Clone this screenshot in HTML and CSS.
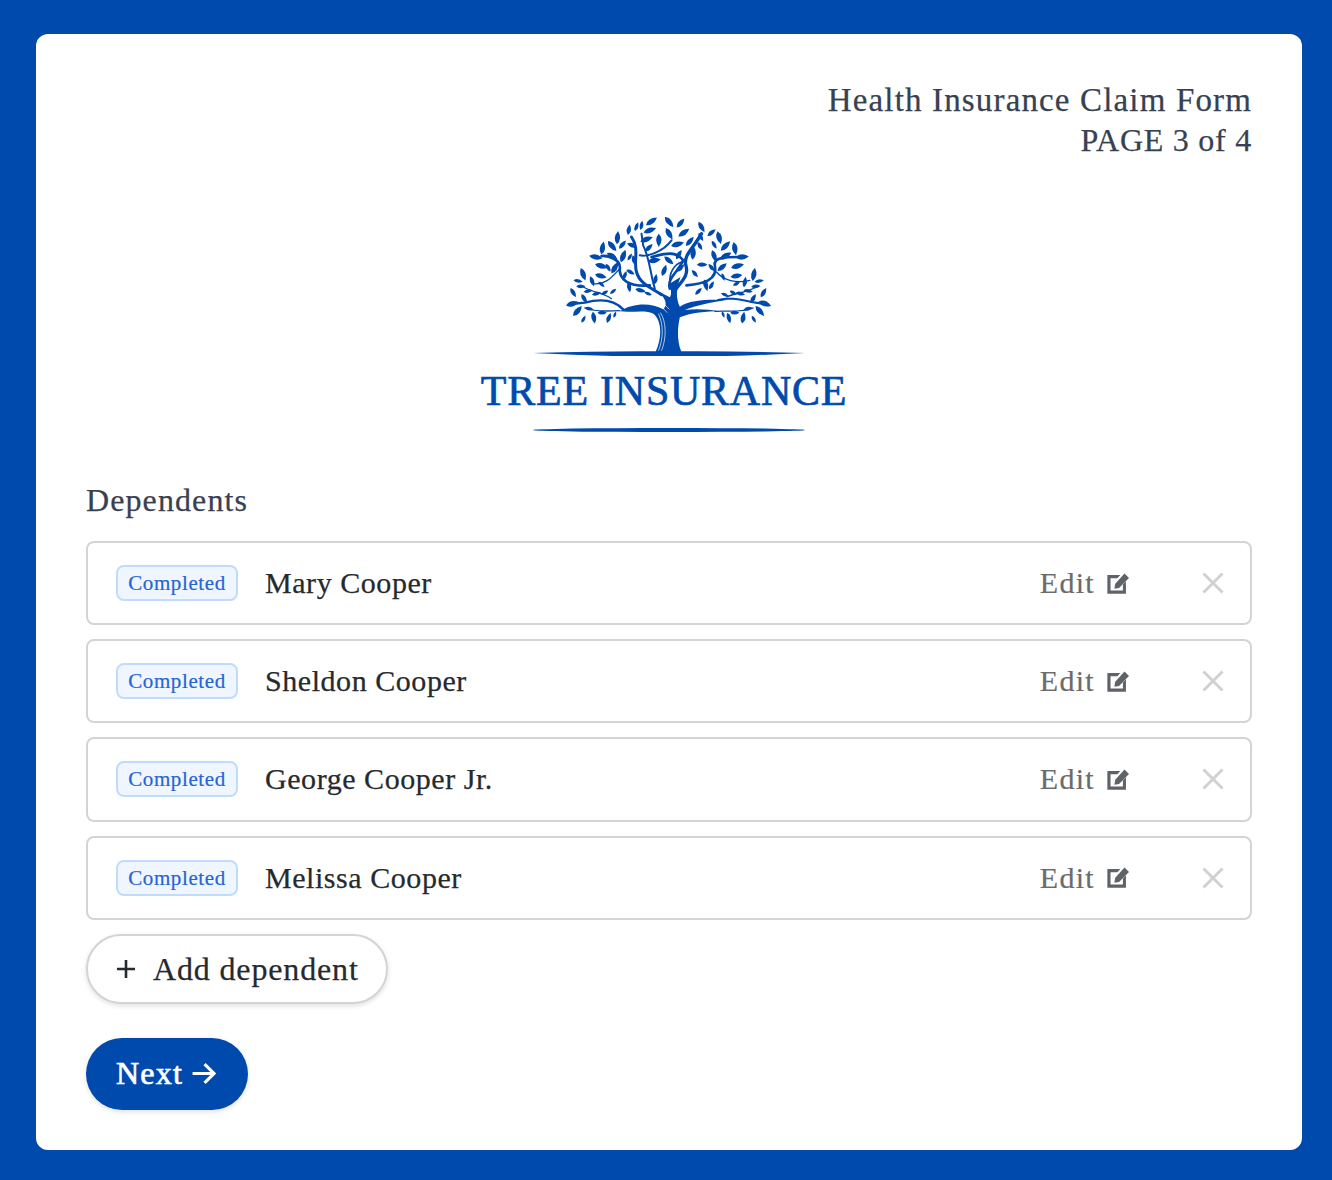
FILE: index.html
```html
<!DOCTYPE html>
<html lang="en">
  <head>
    <meta charset="UTF-8" />
    <meta name="viewport" content="width=device-width, initial-scale=1.0" />
    <title>Health Insurance Claim Form</title>
    <link rel="stylesheet" href="styles.css">
  </head>
  <body>
    <div class="card">
      <div class="form-title">
        <div class="form-name">Health Insurance Claim Form</div>
        <div class="form-page">PAGE 3 of 4</div>
      </div>

      <div class="logo">
        <svg class="logo-tree" viewBox="190 35 815 417" fill="#004aad">
          <defs>
            <path id="lf" d="M-20 0Q-3 -16 20 0Q-3 16 -20 0Z" />
          </defs>
          <!-- trunk and ground -->
          <path d="M190 443Q400 437 558 438C575 400 578 350 552 326C530 312 490 322 450 318C490 292 545 292 580 312C594 296 588 282 565 258L600 276C606 266 604 250 598 236L632 215C618 250 618 280 630 304C660 284 710 282 770 284C720 292 680 300 645 314C680 310 715 312 750 318C710 318 665 322 630 336C622 370 622 410 634 438Q800 437 1005 443Q800 454 600 454Q400 454 190 443Z" />
          <path d="M566 436C580 400 582 360 566 325" fill="none" stroke="#fff" stroke-width="2" />
          <path d="M575 436C590 400 590 350 572 322" fill="none" stroke="#fff" stroke-width="2" />
          <path d="M515 288C550 290 578 303 592 322" fill="none" stroke="#fff" stroke-width="2" />
          <path d="M530 280C560 282 585 295 598 312" fill="none" stroke="#fff" stroke-width="2" />
          <!-- branches -->
          <g fill="none" stroke="#004aad" stroke-linecap="round">
            <path stroke-width="9" d="M575 268C540 245 510 235 500 200C490 170 510 130 485 95" />
            <path stroke-width="6" d="M510 150C530 155 580 140 605 105" />
            <path stroke-width="8" d="M540 240C480 245 445 225 450 185C450 165 420 150 395 152" />
            <path stroke-width="4" d="M450 190C430 210 410 240 370 235" />
            <path stroke-width="7" d="M460 312C430 280 390 280 345 292L305 296" />
            <path stroke-width="4" d="M450 316C420 316 380 322 345 308" />
            <path stroke-width="4" d="M425 280C400 262 370 262 340 245" />
            <path stroke-width="10" d="M612 262C625 235 660 215 648 180C640 150 670 130 695 85" />
            <path stroke-width="8" d="M650 240C700 235 745 225 735 180C730 155 770 155 805 155" />
            <path stroke-width="4" d="M740 200C760 225 800 235 840 225" />
            <path stroke-width="6" d="M745 284C790 272 830 290 885 296" />
            <path stroke-width="4" d="M735 318C780 316 820 322 850 308" />
            <path stroke-width="4" d="M770 275C800 262 830 262 860 245" />
            <path stroke-width="8" d="M600 250C590 220 625 200 640 165C615 130 570 150 545 155" />
            <path stroke-width="5" d="M640 170C625 170 600 190 600 225" />
            <path stroke-width="6" d="M555 250C540 200 540 160 520 120L515 85" />
          </g>
          <!-- leaves, left side -->
          <use href="#lf" transform="translate(545 48) rotate(-35)" />
          <use href="#lf" transform="translate(540 75) rotate(-20)" />
          <use href="#lf" transform="translate(515 60) rotate(-80) scale(.7)" />
          <use href="#lf" transform="translate(500 64) rotate(-70) scale(.7)" />
          <use href="#lf" transform="translate(477 73) rotate(-80) scale(.8)" />
          <use href="#lf" transform="translate(443 97) rotate(-85)" />
          <use href="#lf" transform="translate(398 128) rotate(-80)" />
          <use href="#lf" transform="translate(427 122) rotate(50)" />
          <use href="#lf" transform="translate(458 118) rotate(-50) scale(.8)" />
          <use href="#lf" transform="translate(530 102) rotate(-20)" />
          <use href="#lf" transform="translate(487 120) rotate(20) scale(.8)" />
          <use href="#lf" transform="translate(537 127) rotate(-45) scale(.8)" />
          <use href="#lf" transform="translate(378 155) rotate(10)" />
          <use href="#lf" transform="translate(427 152) rotate(30) scale(.9)" />
          <use href="#lf" transform="translate(460 152) rotate(-70)" />
          <use href="#lf" transform="translate(395 182) rotate(15)" />
          <use href="#lf" transform="translate(415 187) rotate(60) scale(.7)" />
          <use href="#lf" transform="translate(435 187) rotate(-60)" />
          <use href="#lf" transform="translate(393 212) rotate(15) scale(.9)" />
          <use href="#lf" transform="translate(340 207) rotate(70)" />
          <use href="#lf" transform="translate(325 227) rotate(10) scale(.7)" />
          <use href="#lf" transform="translate(333 243) rotate(0) scale(.7)" />
          <use href="#lf" transform="translate(367 228) rotate(70) scale(.8)" />
          <use href="#lf" transform="translate(395 237) rotate(40) scale(.6)" />
          <use href="#lf" transform="translate(310 262) rotate(60) scale(.8)" />
          <use href="#lf" transform="translate(355 257) rotate(-10) scale(.7)" />
          <use href="#lf" transform="translate(380 265) rotate(-15) scale(.7)" />
          <use href="#lf" transform="translate(405 262) rotate(-30) scale(.6)" />
          <use href="#lf" transform="translate(430 258) rotate(-40) scale(.6)" />
          <use href="#lf" transform="translate(343 280) rotate(60) scale(.8)" />
          <use href="#lf" transform="translate(308 295) rotate(-15)" />
          <use href="#lf" transform="translate(323 317) rotate(-50)" />
          <use href="#lf" transform="translate(372 337) rotate(80) scale(.9)" />
          <use href="#lf" transform="translate(341 342) rotate(-60) scale(.6)" />
          <use href="#lf" transform="translate(417 338) rotate(-70) scale(.8)" />
          <use href="#lf" transform="translate(358 310) rotate(10) scale(.7)" />
          <use href="#lf" transform="translate(397 322) rotate(0) scale(.7)" />
          <use href="#lf" transform="translate(435 328) rotate(-70) scale(.5)" />
          <use href="#lf" transform="translate(512 255) rotate(15) scale(.8)" />
          <use href="#lf" transform="translate(535 265) rotate(20) scale(.6)" />
          <use href="#lf" transform="translate(478 245) rotate(80) scale(.8)" />
          <use href="#lf" transform="translate(465 210) rotate(-70) scale(.7)" />
          <use href="#lf" transform="translate(493 165) rotate(75) scale(.8)" />
          <use href="#lf" transform="translate(480 155) rotate(-60) scale(.6)" />
          <use href="#lf" transform="translate(482 200) rotate(30) scale(.7)" />
          <!-- leaves, middle -->
          <use href="#lf" transform="translate(598 50) rotate(50)" />
          <use href="#lf" transform="translate(632 53) rotate(-50) scale(.9)" />
          <use href="#lf" transform="translate(567 105) rotate(90)" />
          <use href="#lf" transform="translate(598 85) rotate(60)" />
          <use href="#lf" transform="translate(553 165) rotate(-10)" />
          <use href="#lf" transform="translate(597 165) rotate(40) scale(.9)" />
          <use href="#lf" transform="translate(627 148) rotate(-60) scale(.8)" />
          <use href="#lf" transform="translate(583 195) rotate(-70) scale(.9)" />
          <use href="#lf" transform="translate(557 222) rotate(-80) scale(.8)" />
          <use href="#lf" transform="translate(632 188) rotate(-45) scale(.8)" />
          <use href="#lf" transform="translate(615 237) rotate(-50) scale(.9)" />
          <!-- leaves, right side -->
          <use href="#lf" transform="translate(642 82) rotate(-35)" />
          <use href="#lf" transform="translate(695 65) rotate(60) scale(.9)" />
          <use href="#lf" transform="translate(725 82) rotate(-40) scale(.8)" />
          <use href="#lf" transform="translate(748 97) rotate(75)" />
          <use href="#lf" transform="translate(693 95) rotate(60) scale(.7)" />
          <use href="#lf" transform="translate(660 108) rotate(-50) scale(.9)" />
          <use href="#lf" transform="translate(623 117) rotate(-15)" />
          <use href="#lf" transform="translate(690 122) rotate(60) scale(.7)" />
          <use href="#lf" transform="translate(733 118) rotate(60) scale(.7)" />
          <use href="#lf" transform="translate(767 122) rotate(-45)" />
          <use href="#lf" transform="translate(795 130) rotate(80)" />
          <use href="#lf" transform="translate(670 143) rotate(-85)" />
          <use href="#lf" transform="translate(817 155) rotate(-5)" />
          <use href="#lf" transform="translate(767 152) rotate(-30)" />
          <use href="#lf" transform="translate(733 152) rotate(70) scale(.9)" />
          <use href="#lf" transform="translate(803 182) rotate(-15)" />
          <use href="#lf" transform="translate(757 185) rotate(-40) scale(.9)" />
          <use href="#lf" transform="translate(725 187) rotate(50) scale(.7)" />
          <use href="#lf" transform="translate(697 178) rotate(0) scale(.8)" />
          <use href="#lf" transform="translate(800 212) rotate(-10) scale(.9)" />
          <use href="#lf" transform="translate(760 215) rotate(70) scale(.6)" />
          <use href="#lf" transform="translate(725 240) rotate(-60) scale(.7)" />
          <use href="#lf" transform="translate(675 205) rotate(50) scale(.7)" />
          <use href="#lf" transform="translate(708 240) rotate(75) scale(.9)" />
          <use href="#lf" transform="translate(686 258) rotate(-45) scale(.7)" />
          <use href="#lf" transform="translate(852 207) rotate(-80)" />
          <use href="#lf" transform="translate(868 227) rotate(-10) scale(.7)" />
          <use href="#lf" transform="translate(858 243) rotate(-5) scale(.7)" />
          <use href="#lf" transform="translate(825 230) rotate(-80) scale(.8)" />
          <use href="#lf" transform="translate(800 235) rotate(-30) scale(.6)" />
          <use href="#lf" transform="translate(881 262) rotate(-60) scale(.8)" />
          <use href="#lf" transform="translate(835 257) rotate(10) scale(.7)" />
          <use href="#lf" transform="translate(812 265) rotate(15) scale(.7)" />
          <use href="#lf" transform="translate(790 262) rotate(30) scale(.6)" />
          <use href="#lf" transform="translate(765 268) rotate(20) scale(.6)" />
          <use href="#lf" transform="translate(850 280) rotate(-60) scale(.8)" />
          <use href="#lf" transform="translate(885 295) rotate(20)" />
          <use href="#lf" transform="translate(870 317) rotate(50)" />
          <use href="#lf" transform="translate(820 337) rotate(-80) scale(.9)" />
          <use href="#lf" transform="translate(852 342) rotate(60) scale(.6)" />
          <use href="#lf" transform="translate(777 338) rotate(75) scale(.8)" />
          <use href="#lf" transform="translate(835 310) rotate(-10) scale(.7)" />
          <use href="#lf" transform="translate(795 322) rotate(0) scale(.7)" />
          <use href="#lf" transform="translate(760 328) rotate(70) scale(.5)" />
        </svg>
        <div class="logo-name">TREE INSURANCE</div>
        <div class="logo-rule"></div>
      </div>

      <div class="section-label">Dependents</div>

      <div class="dependents">
        <div class="dependent">
          <span class="badge">Completed</span>
          <span class="dependent-name">Mary Cooper</span>
          <a href="#" class="edit-link">Edit
            <svg class="edit-icon" viewBox="0 0 24 24"><path d="M3 4.5h11.5l-2.6 2.8H5.8v11h11v-5.5l2.7-2.8V21H3z" /><path d="M10 12.2 18.2 3l4 4-8.8 9-4.2.6z" /></svg>
          </a>
          <svg class="remove-icon" viewBox="0 0 22 22"><path d="M1.5 1.5 20.5 20.5M20.5 1.5 1.5 20.5" /></svg>
        </div>
        <div class="dependent">
          <span class="badge">Completed</span>
          <span class="dependent-name">Sheldon Cooper</span>
          <a href="#" class="edit-link">Edit
            <svg class="edit-icon" viewBox="0 0 24 24"><path d="M3 4.5h11.5l-2.6 2.8H5.8v11h11v-5.5l2.7-2.8V21H3z" /><path d="M10 12.2 18.2 3l4 4-8.8 9-4.2.6z" /></svg>
          </a>
          <svg class="remove-icon" viewBox="0 0 22 22"><path d="M1.5 1.5 20.5 20.5M20.5 1.5 1.5 20.5" /></svg>
        </div>
        <div class="dependent">
          <span class="badge">Completed</span>
          <span class="dependent-name">George Cooper Jr.</span>
          <a href="#" class="edit-link">Edit
            <svg class="edit-icon" viewBox="0 0 24 24"><path d="M3 4.5h11.5l-2.6 2.8H5.8v11h11v-5.5l2.7-2.8V21H3z" /><path d="M10 12.2 18.2 3l4 4-8.8 9-4.2.6z" /></svg>
          </a>
          <svg class="remove-icon" viewBox="0 0 22 22"><path d="M1.5 1.5 20.5 20.5M20.5 1.5 1.5 20.5" /></svg>
        </div>
        <div class="dependent">
          <span class="badge">Completed</span>
          <span class="dependent-name">Melissa Cooper</span>
          <a href="#" class="edit-link">Edit
            <svg class="edit-icon" viewBox="0 0 24 24"><path d="M3 4.5h11.5l-2.6 2.8H5.8v11h11v-5.5l2.7-2.8V21H3z" /><path d="M10 12.2 18.2 3l4 4-8.8 9-4.2.6z" /></svg>
          </a>
          <svg class="remove-icon" viewBox="0 0 22 22"><path d="M1.5 1.5 20.5 20.5M20.5 1.5 1.5 20.5" /></svg>
        </div>
      </div>

      <button class="add-btn">
        <svg class="add-icon" viewBox="0 0 20 20"><path d="M10 1V19M1 10H19" /></svg>
        Add dependent
      </button>

      <button class="next-btn">
        Next
        <svg class="next-icon" viewBox="0 0 24 24"><path d="M1.5 12H22M13 3l9 9-9 9" /></svg>
      </button>
    </div>
  </body>
</html>
```

FILE: styles.css
```css
* {
  box-sizing: border-box;
}
body {
  font-family: "Liberation Serif", "Times New Roman", serif;
  margin: 0;
  padding: 34px 30px 30px 36px;
  background-color: #004aad;
}
.card {
  background-color: #fff;
  border-radius: 12px;
  height: 1116px;
  padding: 46px 50px 0;
  display: flex;
  flex-direction: column;
  align-items: stretch;
}
.form-title {
  text-align: right;
  line-height: 40px;
  color: #374151;
  -webkit-text-stroke: 0.25px #374151;
}
.form-name {
  font-size: 33px;
  letter-spacing: 1.15px;
}
.form-page {
  font-size: 32px;
  letter-spacing: 0.75px;
}
.logo {
  display: flex;
  flex-direction: column;
  align-items: center;
  margin-top: 57px;
}
.logo-tree {
  display: block;
  width: 272px;
  height: 139px;
}
.logo-name {
  font-size: 42px;
  line-height: 40px;
  letter-spacing: 0.75px;
  color: #004aad;
  margin: 15px 10px 0 0;
  -webkit-text-stroke: 0.7px #004aad;
}
.logo-rule {
  width: 272px;
  height: 4px;
  margin-top: 17px;
  background-color: #004aad;
  border-radius: 50%;
}
.section-label {
  font-size: 32px;
  line-height: 36px;
  letter-spacing: 1.1px;
  color: #374151;
  margin-top: 50px;
  -webkit-text-stroke: 0.25px #374151;
}
.dependents {
  display: flex;
  flex-direction: column;
  gap: 14px;
  margin-top: 23px;
}
.dependent {
  display: flex;
  align-items: center;
  height: 84.2px;
  padding: 0 26px 0 28px;
  border: 2px solid #d4d4d4;
  border-radius: 8px;
}
.badge {
  width: 122px;
  height: 36px;
  line-height: 33px;
  text-align: center;
  font-size: 21px;
  letter-spacing: 0.6px;
  color: #2563d6;
  background-color: #eff6ff;
  border: 2px solid #bfdbfe;
  border-radius: 8px;
  -webkit-text-stroke: 0.2px #2563d6;
}
.dependent-name {
  margin-left: 27px;
  font-size: 30px;
  letter-spacing: 0.55px;
  color: #262a2e;
  -webkit-text-stroke: 0.25px #262a2e;
}
.edit-link {
  display: flex;
  align-items: center;
  gap: 9px;
  margin-left: auto;
  font-size: 30px;
  letter-spacing: 1.3px;
  color: #6b6b6b;
  text-decoration: none;
  -webkit-text-stroke: 0.2px #6b6b6b;
}
.edit-icon {
  width: 27px;
  height: 27px;
  fill: #5f6368;
}
.remove-icon {
  width: 22px;
  height: 22px;
  margin-left: 71px;
  fill: none;
  stroke: #d1d1d1;
  stroke-width: 3;
}
.add-btn {
  display: flex;
  align-items: center;
  gap: 17px;
  align-self: flex-start;
  width: 302px;
  height: 70px;
  margin-top: 14.4px;
  padding: 0 0 0 28px;
  font-family: inherit;
  font-size: 32px;
  letter-spacing: 0.85px;
  white-space: nowrap;
  color: #262a2e;
  background-color: #fff;
  border: 2px solid #d4d4d4;
  border-radius: 35px;
  box-shadow: 0 2px 5px rgba(0, 0, 0, 0.12);
  -webkit-text-stroke: 0.25px #262a2e;
}
.add-icon {
  width: 20px;
  height: 20px;
  fill: none;
  stroke: #262a2e;
  stroke-width: 2.6;
}
.next-btn {
  display: flex;
  align-items: center;
  gap: 8px;
  align-self: flex-start;
  width: 162px;
  height: 72px;
  margin-top: 34px;
  padding: 0 30px 2px;
  font-family: inherit;
  font-size: 32px;
  letter-spacing: 1.2px;
  color: #fff;
  background-color: #004aad;
  border: none;
  border-radius: 36px;
  box-shadow: 0 2px 5px rgba(0, 0, 0, 0.12);
  -webkit-text-stroke: 0.7px #fff;
}
.next-icon {
  width: 25px;
  height: 25px;
  fill: none;
  stroke: #fff;
  stroke-width: 3;
}
```
